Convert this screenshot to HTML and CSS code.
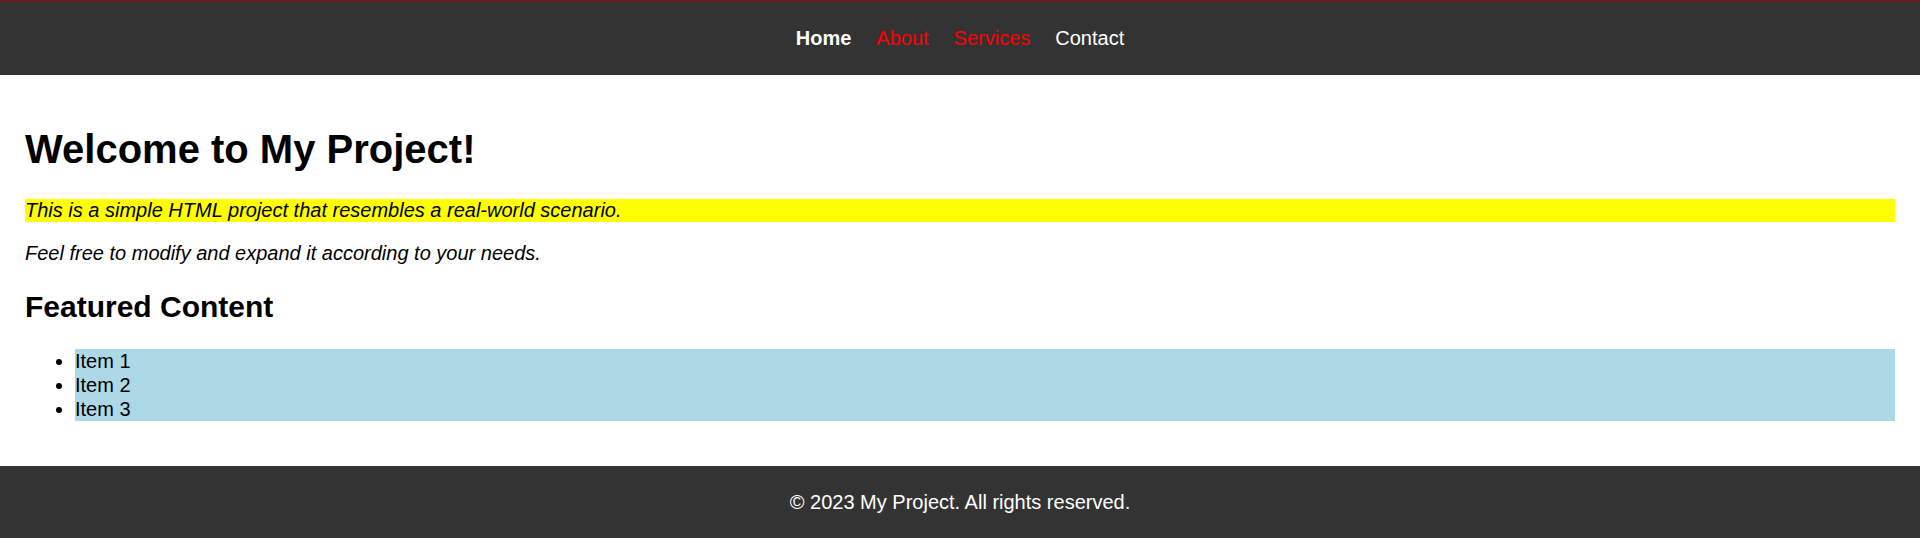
FILE: index.html
```html
<!DOCTYPE html>
<html lang="en">
<head>
<meta charset="utf-8">
<title>My Project</title>
<link rel="stylesheet" href="styles.css">
</head>
<body>
<header class="site-header">
  <nav class="nav">
    <a class="nav-link nav-active" href="#">Home</a>
    <a class="nav-link nav-red" href="#">About</a>
    <a class="nav-link nav-red" href="#">Services</a>
    <a class="nav-link" href="#">Contact</a>
  </nav>
</header>
<main class="main">
  <h1 class="title">Welcome to My Project!</h1>
  <p class="lead highlight">This is a simple HTML project that resembles a real-world scenario.</p>
  <p class="lead">Feel free to modify and expand it according to your needs.</p>
  <h2 class="subtitle">Featured Content</h2>
  <ul class="items">
    <li class="item">Item 1</li>
    <li class="item">Item 2</li>
    <li class="item">Item 3</li>
  </ul>
</main>
<footer class="site-footer">
  <p class="copyright">© 2023 My Project. All rights reserved.</p>
</footer>
</body>
</html>
```
FILE: styles.css
```css
html, body {
  margin: 0;
  padding: 0;
}
body {
  font-family: "Liberation Sans", Arial, sans-serif;
  font-size: 20px;
  color: #000;
  background: #fff;
}
.site-header {
  background: #333333;
  border-top: 2px solid #6e1722;
  padding: 25px 0;
}
.nav {
  display: flex;
  justify-content: center;
  gap: 25px;
  line-height: 23px;
}
.nav-link {
  color: #fff;
  text-decoration: none;
}
.nav-active {
  font-weight: bold;
}
.nav-red {
  color: #ff0000;
}
.main {
  padding: 25px;
}
.title {
  font-size: 40px;
  font-weight: bold;
  margin: 27px 0;
}
.lead {
  font-style: italic;
  margin: 20px 0;
  line-height: 23px;
}
.highlight {
  background: #ffff00;
}
.subtitle {
  font-size: 30px;
  font-weight: bold;
  margin: 25px 0;
}
.items {
  margin: 20px 0;
  padding-left: 50px;
}
.item {
  background: #add8e6;
  line-height: 24px;
}
.site-footer {
  background: #333333;
  color: #fff;
  text-align: center;
  padding: 25px 0;
}
.copyright {
  margin: 0;
  line-height: 23px;
}
```
